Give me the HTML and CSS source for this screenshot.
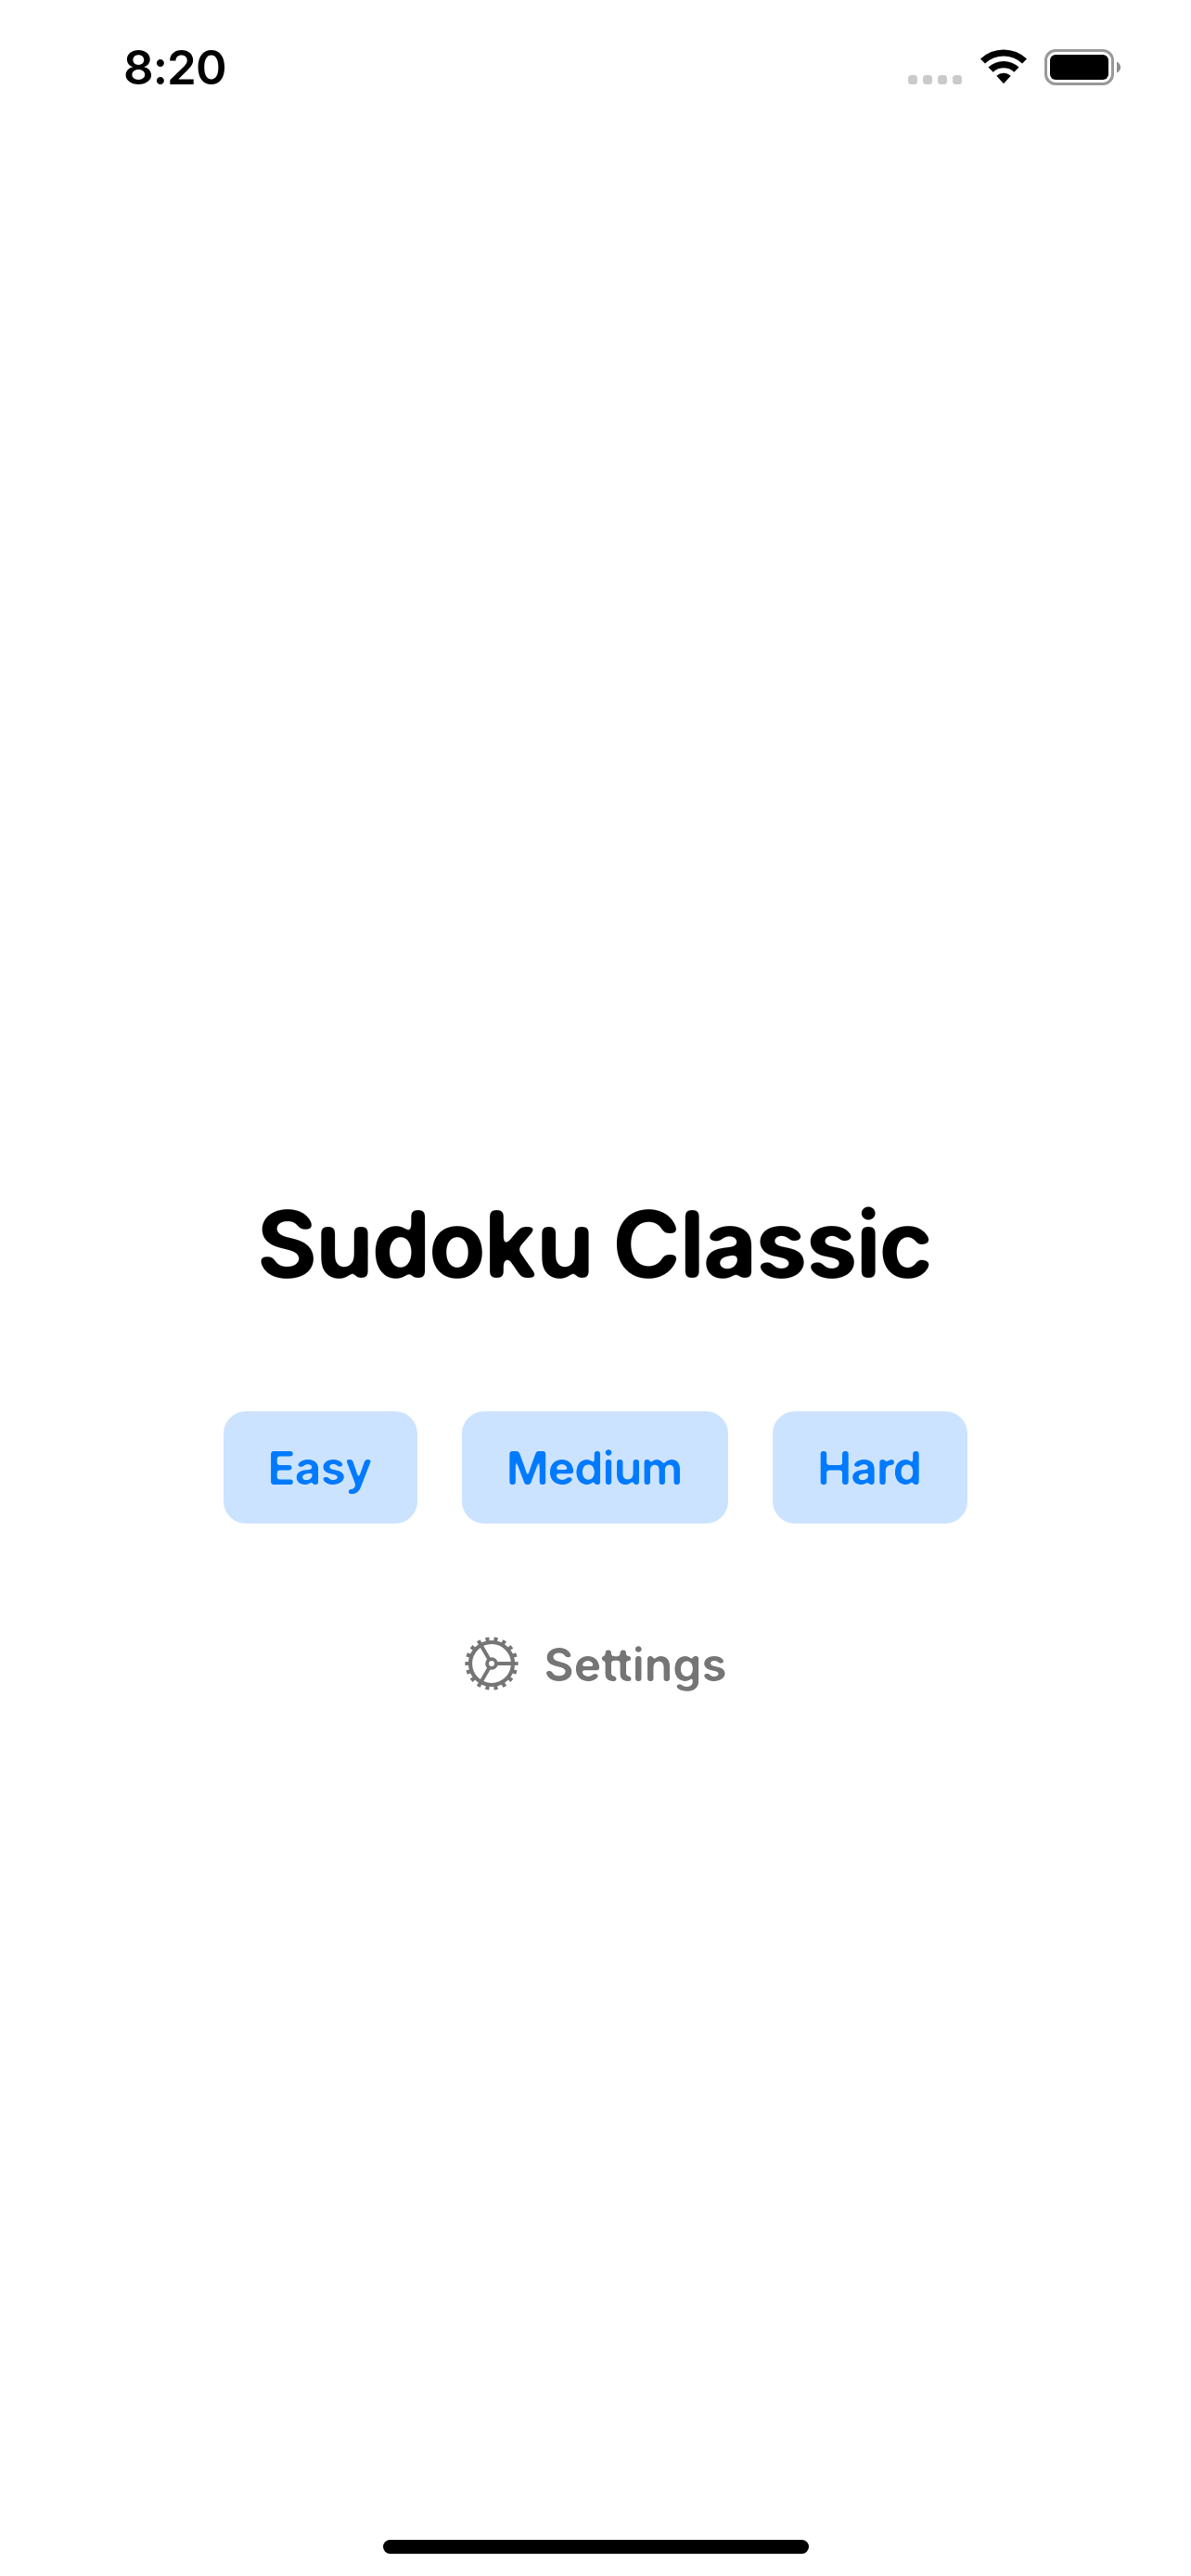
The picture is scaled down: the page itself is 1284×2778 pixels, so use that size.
FILE: index.html
```html
<!DOCTYPE html>
<html lang="en">
<head>
<meta charset="utf-8">
<title>Sudoku Classic</title>
<link rel="stylesheet" href="styles.css">
</head>
<body>
<svg class="filters" width="0" height="0" aria-hidden="true">
  <filter id="round-title" x="-5%" y="-5%" width="110%" height="110%" color-interpolation-filters="sRGB">
    <feGaussianBlur stdDeviation="3.2"/>
    <feComponentTransfer><feFuncA type="linear" slope="8" intercept="-3.5"/></feComponentTransfer>
  </filter>
  <filter id="round-label" x="-5%" y="-5%" width="110%" height="110%" color-interpolation-filters="sRGB">
    <feGaussianBlur stdDeviation="1.7"/>
    <feComponentTransfer><feFuncA type="linear" slope="4.500" intercept="-1.75"/></feComponentTransfer>
  </filter>
</svg>
<div class="screen">
  <header class="status">
    <span class="time">8:20</span>
    <div class="indicators">
      <div class="dots"><i></i><i></i><i></i><i></i></div>
      <svg class="wifi" viewBox="0 0 52 38">
        <path d="M1 10.500A36 36 0 0 1 51 10.500L46 15.500A29 29 0 0 0 6 15.500Z"/>
        <path d="M9.500 19.500A24 24 0 0 1 42.500 19.500L37.300 24.800A16.500 16.500 0 0 0 14.700 24.800Z"/>
        <path d="M18.300 28.800A11.500 11.500 0 0 1 33.700 28.800L26.700 36.500Q26 37.200 25.300 36.500Z"/>
      </svg>
      <svg class="battery" viewBox="0 0 83 39">
        <rect x="1.500" y="1.500" width="72" height="36" rx="10.500" fill="none" stroke="#999" stroke-width="3"/>
        <rect x="6" y="6" width="63" height="27" rx="6"/>
        <path d="M78 13.500Q82 15.500 82 19.500T78 25.500Z" fill="#8c8c8c"/>
      </svg>
    </div>
  </header>
  <main class="menu">
    <h1 class="title">Sudoku Classic</h1>
    <div class="levels">
      <button class="level easy"><span class="label">Easy</span></button>
      <button class="level medium"><span class="label">Medium</span></button>
      <button class="level hard"><span class="label">Hard</span></button>
    </div>
    <button class="settings">
      <svg class="gear" viewBox="-30 -30 60 60">
        <g fill="none" stroke="#757575">
          <circle r="23" stroke-width="4.200"/>
          <circle r="26.300" stroke-width="4.600" pathLength="180" stroke-dasharray="4.400 5.600" stroke-dashoffset="2.200"/>
          <circle r="4.900" stroke-width="3.800"/>
          <path d="M6 0H22M-3 -5.200L-11 -19.100M-3 5.200L-11 19.100" stroke-width="4"/>
        </g>
      </svg>
      <span class="label settings-label">Settings</span>
    </button>
  </main>
  <footer class="home"><div class="home-bar"></div></footer>
</div>
</body>
</html>
```
FILE: styles.css
```css
* { box-sizing: border-box; }
body { margin: 0; background: #fff; color: #000; font-family: Inter, "Liberation Sans", sans-serif; }
.filters { display: block; }
.screen { display: flex; flex-direction: column; width: 1284px; height: 2778px; }
.status { display: flex; justify-content: space-between; height: 141px; padding: 43px 75px 0 133px; }
.time { font-size: 51px; font-weight: 600; line-height: 60px; letter-spacing: -0.9px; }
.indicators { display: flex; align-items: flex-start; padding-top: 10px; }
.dots { display: flex; gap: 6px; margin: 28px 19px 0 0; }
.dots i { width: 10px; height: 10px; border-radius: 3.500px; background: #cacaca; }
.wifi { width: 52px; height: 38px; margin-right: 18px; }
.battery { width: 83px; height: 39px; }
.menu { display: flex; flex: 1; flex-direction: column; align-items: center; padding-top: 1140px; }
.title { margin: 0; padding-right: 3px; font-size: 101px; font-weight: 700; line-height: 120px; letter-spacing: -2.300px; white-space: nowrap; filter: url(#round-title); }
.levels { display: flex; gap: 48px; margin-top: 121px; }
.level { height: 121px; padding: 1px 2px 0 0; border: 0; border-radius: 24px; background: #cce3ff; color: #007aff; font: 600 50px/120px Inter, "Liberation Sans", sans-serif; letter-spacing: -1px; }
.label { display: block; filter: url(#round-label); }
.easy { width: 209px; }
.medium { width: 287px; }
.hard { width: 210px; }
.settings { display: flex; align-items: center; gap: 26px; height: 62px; margin-top: 120px; padding: 0; border: 0; background: none; color: #757575; font: 600 50px/62px Inter, "Liberation Sans", sans-serif; letter-spacing: -0.100px; }
.settings-label { padding-top: 2px; }
.gear { width: 60px; height: 60px; }
.home { display: flex; justify-content: center; height: 39px; }
.home-bar { width: 459px; height: 15px; border-radius: 8px; background: #000; }
```
